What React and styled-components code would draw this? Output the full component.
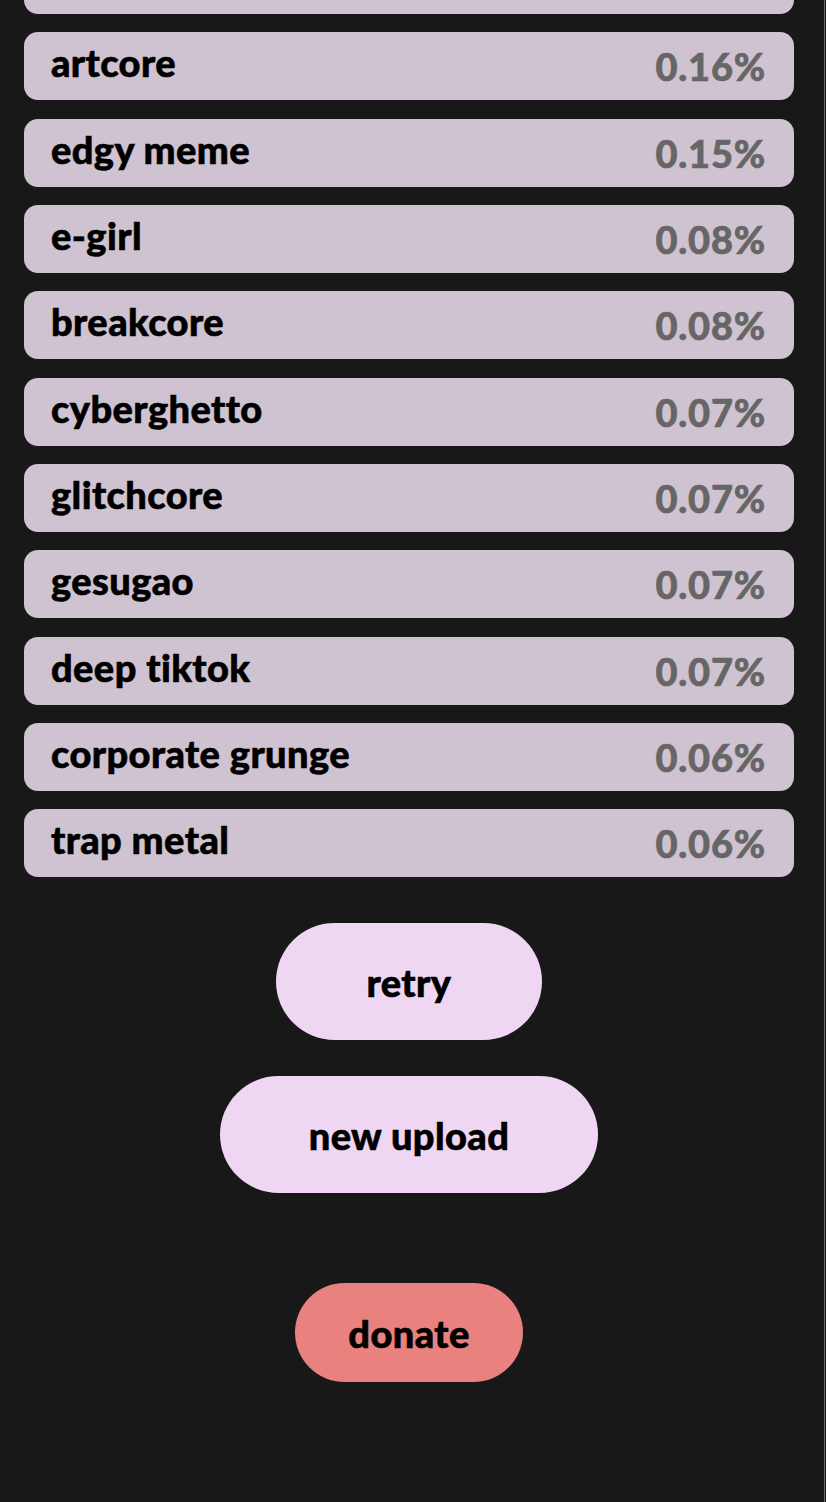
import styled, { createGlobalStyle } from "styled-components";

const results = [
  { name: "", pct: "" },
  { name: "artcore", pct: "0.16%" },
  { name: "edgy meme", pct: "0.15%" },
  { name: "e-girl", pct: "0.08%" },
  { name: "breakcore", pct: "0.08%" },
  { name: "cyberghetto", pct: "0.07%" },
  { name: "glitchcore", pct: "0.07%" },
  { name: "gesugao", pct: "0.07%" },
  { name: "deep tiktok", pct: "0.07%" },
  { name: "corporate grunge", pct: "0.06%" },
  { name: "trap metal", pct: "0.06%" },
];

const GlobalStyle = createGlobalStyle`
  html, body {
    margin: 0;
    padding: 0;
    background: #181818;
  }
  body {
    font-family: Lato, "Noto Sans", sans-serif;
    overflow: hidden;
  }
`;

const App = () => {
  return (
    <>
      <GlobalStyle />
      <Page>
        <ResultList>
          {results.map((r, i) => (
            <ResultRow key={i}>
              <Name>{r.name}</Name>
              <Percent>{r.pct}</Percent>
            </ResultRow>
          ))}
        </ResultList>
        <Actions>
          <PillButton width="266px">retry</PillButton>
          <PillButton width="378px">new upload</PillButton>
        </Actions>
        <DonateButton>donate</DonateButton>
      </Page>
    </>
  );
};

export default App;

const Page = styled.div`
  display: flex;
  flex-direction: column;
  align-items: center;
  width: 825px;
  height: 1502px;
  padding-right: 6px;
  border-right: 1px solid #6a6a6a;
  overflow: hidden;
  box-sizing: border-box;
`;

const ResultList = styled.div`
  display: flex;
  flex-direction: column;
  gap: 18.33px;
  width: 770px;
  margin-top: -54px;
`;

const ResultRow = styled.div`
  display: flex;
  align-items: center;
  justify-content: space-between;
  height: 68px;
  padding: 0 28px 0 27px;
  box-sizing: border-box;
  background: #cfc3d1;
  border-radius: 14px;
`;

const Name = styled.span`
  font-size: 38px;
  font-weight: 900;
  letter-spacing: 0.4px;
  -webkit-text-stroke: 0.6px #000;
  color: #000;
  margin-top: -8px;
`;

const Percent = styled.span`
  font-size: 38px;
  font-weight: 900;
  letter-spacing: 0.8px;
  -webkit-text-stroke: 0.6px #666666;
  color: #666666;
`;

const Actions = styled.div`
  display: flex;
  flex-direction: column;
  align-items: center;
  gap: 36px;
  margin-top: 46px;
`;

const PillButton = styled.button`
  width: ${(p) => p.width};
  height: 117px;
  border: none;
  border-radius: 59px;
  background: #efd6f3;
  color: #000;
  font-family: Lato, "Noto Sans", sans-serif;
  font-size: 38px;
  font-weight: 900;
  letter-spacing: 0.4px;
  -webkit-text-stroke: 0.6px #000;
  padding: 0;
  cursor: pointer;
`;

const DonateButton = styled(PillButton)`
  width: 228px;
  height: 99px;
  border-radius: 50px;
  background: #e9827e;
  margin-top: 90px;
`;
